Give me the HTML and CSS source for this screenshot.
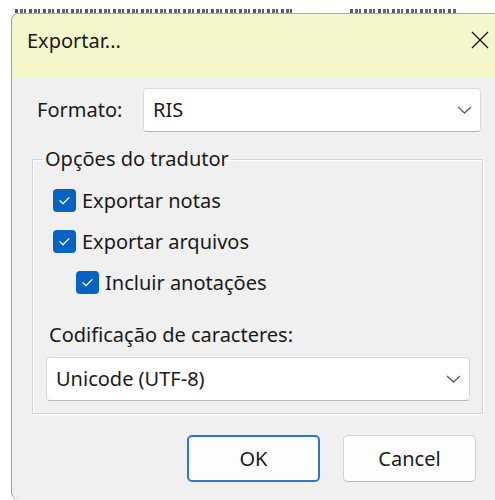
FILE: index.html
```html
<!DOCTYPE html>
<html lang="pt">
<head>
<meta charset="utf-8">
<title>Exportar</title>
<link rel="stylesheet" href="styles.css">
</head>
<body>
<div class="backdrop">
  <span class="scrap long"></span>
  <span class="scrap short"></span>
</div>
<div class="dialog">
  <div class="titlebar">
    <span class="title">Exportar...</span>
    <svg class="close" viewBox="0 0 18 18" width="18" height="18"><path d="M1 1 L17 17 M17 1 L1 17"/></svg>
  </div>
  <div class="content">
    <div class="format-row">
      <span class="label">Formato:</span>
      <div class="select">
        <span>RIS</span>
        <svg class="chevron" viewBox="0 0 15 8" width="15" height="8"><path d="M1 1 L7.5 7 L14 1"/></svg>
      </div>
    </div>
    <fieldset class="group">
      <legend>Opções do tradutor</legend>
      <div class="checks">
        <label class="check">
          <svg class="box" viewBox="0 0 23 23" width="23" height="23"><rect x="0" y="0" width="23" height="23" rx="4"/><path d="M7 11.8 L10 14.8 L16 8.6"/></svg>
          <span>Exportar notas</span>
        </label>
        <label class="check">
          <svg class="box" viewBox="0 0 23 23" width="23" height="23"><rect x="0" y="0" width="23" height="23" rx="4"/><path d="M7 11.8 L10 14.8 L16 8.6"/></svg>
          <span>Exportar arquivos</span>
        </label>
        <label class="check sub">
          <svg class="box" viewBox="0 0 23 23" width="23" height="23"><rect x="0" y="0" width="23" height="23" rx="4"/><path d="M7 11.8 L10 14.8 L16 8.6"/></svg>
          <span>Incluir anotações</span>
        </label>
      </div>
      <div class="enc-label">Codificação de caracteres:</div>
      <div class="select enc">
        <span>Unicode (UTF-8)</span>
        <svg class="chevron" viewBox="0 0 15 8" width="15" height="8"><path d="M1 1 L7.5 7 L14 1"/></svg>
      </div>
    </fieldset>
    <div class="buttons">
      <button class="btn primary">OK</button>
      <button class="btn">Cancel</button>
    </div>
  </div>
</div>
</body>
</html>
```
FILE: styles.css
```css
html, body {
  margin: 0;
  padding: 0;
}

body {
  width: 495px;
  height: 500px;
  overflow: hidden;
  background: #ffffff;
  font-family: "Noto Sans", "Open Sans", sans-serif;
  font-size: 20px;
  color: #1a1a1a;
}

/* window behind the dialog: only a sliver of its content shows */
.backdrop {
  height: 13px;
  display: flex;
  align-items: flex-end;
  padding-left: 15px;
}

.scrap {
  height: 4px;
  opacity: 0.8;
  background: repeating-linear-gradient(90deg,
    #2e2e4a 0 3px, transparent 3px 5px,
    #4a3a5a 5px 8px, transparent 8px 9px,
    #333340 9px 11px, transparent 11px 14px);
}

.scrap.long {
  width: 278px;
}

.scrap.short {
  width: 107px;
  margin-left: 57px;
}

.dialog {
  box-sizing: border-box;
  width: 484px;
  height: 487px;
  margin-left: 11px;
  background: #f0f0f0;
  border-top: 1px solid #a9a9a9;
  border-left: 1px solid #9c9c9c;
  border-top-left-radius: 8px;
  border-bottom-left-radius: 8px;
  overflow: hidden;
}

.titlebar {
  box-sizing: border-box;
  height: 64px;
  display: flex;
  justify-content: space-between;
  align-items: flex-start;
  padding: 14px 6px 0 15px;
  background: #f4f6cb;
}

.title {
  line-height: 26px;
}

.close {
  margin-top: 3px;
  fill: none;
  stroke: #1a1a1a;
  stroke-width: 1.4;
}

.content {
  padding: 10px 12px 0 20px;
}

.format-row {
  display: flex;
  align-items: center;
  height: 44px;
  padding: 0 2px 0 5px;
}

.label {
  flex: none;
  width: 106px;
  line-height: 26px;
}

.select {
  box-sizing: border-box;
  flex: 1;
  height: 44px;
  display: flex;
  align-items: center;
  justify-content: space-between;
  padding: 0 8px 0 9px;
  background: #ffffff;
  border: 1px solid #d9d9d9;
  border-bottom-color: #b9b9b9;
  border-radius: 4px;
  line-height: 26px;
}

.chevron {
  fill: none;
  stroke: #5f5f5f;
  stroke-width: 1.3;
}

.group {
  margin: 14px 0 0 0;
  padding: 0 12px 12px 13px;
  min-width: 0;
  border: 1px solid #d4d4d4;
  box-shadow: 1px 1px 0 #ffffff, inset 1px 1px 0 #ffffff;
}

.group legend {
  margin-left: -3px;
  padding: 0 2px;
  line-height: 26px;
}

.checks {
  padding-top: 8px;
}

.check {
  display: flex;
  align-items: center;
  gap: 6px;
  height: 41px;
  margin-left: 7px;
}

.check.sub {
  margin-left: 30px;
}

.box {
  flex: none;
}

.box rect {
  fill: #0563c1;
}

.box path {
  fill: none;
  stroke: #ffffff;
  stroke-width: 1.3;
  stroke-linecap: round;
  stroke-linejoin: round;
}

.enc-label {
  margin-top: 19px;
  padding-left: 3px;
  line-height: 26px;
}

.select.enc {
  margin-top: 9px;
}

.buttons {
  display: flex;
  justify-content: flex-end;
  gap: 23px;
  margin-top: 21px;
  padding-right: 7px;
}

.btn {
  box-sizing: border-box;
  width: 133px;
  height: 47px;
  padding: 0;
  font-family: inherit;
  font-size: 20px;
  color: #1a1a1a;
  background: #fdfdfd;
  border: 1px solid #d2d2d2;
  border-bottom-color: #b3b3b3;
  border-radius: 5px;
}

.btn.primary {
  border: 2px solid #2a78d2;
}
```
